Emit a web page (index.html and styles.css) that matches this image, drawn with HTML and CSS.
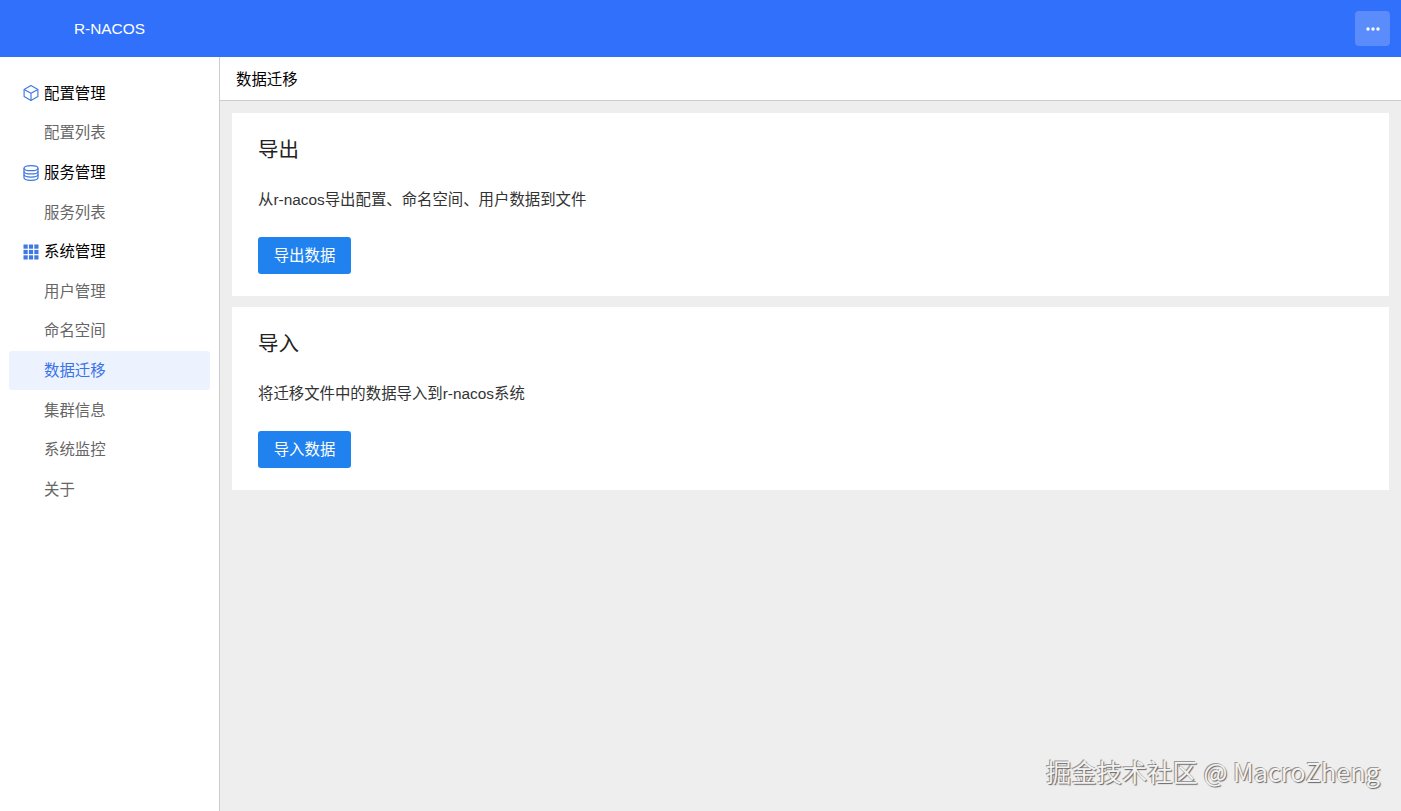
FILE: index.html
```html
<!DOCTYPE html>
<html lang="zh-CN">
<head>
<meta charset="utf-8">
<title>R-NACOS</title>
<link rel="stylesheet" href="styles.css">
</head>
<body>
<div class="app">
  <header class="topbar">
    <span class="brand">R-NACOS</span>
    <button class="more" aria-label="更多">
      <svg width="14" height="4" viewBox="0 0 14 4"><circle cx="2" cy="2" r="1.7"/><circle cx="7" cy="2" r="1.7"/><circle cx="12" cy="2" r="1.7"/></svg>
    </button>
  </header>
  <div class="body">
    <nav class="sidebar">
      <div class="nav-item group">
        <svg class="icon" viewBox="0 0 16 16" fill="none" stroke="#3f78e0" stroke-width="1.15" stroke-linejoin="round"><path d="M8 .6l6.9 3.8v7.2L8 15.4 1.1 11.6V4.4z"/><path d="M1.1 4.4L8 8.2l6.9-3.8M8 8.2v7.2"/></svg>
        <span>配置管理</span>
      </div>
      <div class="nav-item sub">配置列表</div>
      <div class="nav-item group">
        <svg class="icon" viewBox="0 0 16 16" fill="none" stroke="#3f78e0" stroke-width="1.25"><ellipse cx="8" cy="3.2" rx="7" ry="2.5"/><path d="M1 3.2v9.6c0 1.4 3.1 2.5 7 2.5s7-1.1 7-2.5V3.2"/><path d="M1 6.4c0 1.4 3.1 2.5 7 2.5s7-1.1 7-2.5M1 9.6c0 1.4 3.1 2.5 7 2.5s7-1.1 7-2.5"/></svg>
        <span>服务管理</span>
      </div>
      <div class="nav-item sub">服务列表</div>
      <div class="nav-item group">
        <svg class="icon" viewBox="0 0 16 16" fill="#3f78e0"><rect x=".5" y=".5" width="4.2" height="4.2"/><rect x="5.9" y=".5" width="4.2" height="4.2"/><rect x="11.3" y=".5" width="4.2" height="4.2"/><rect x=".5" y="5.9" width="4.2" height="4.2"/><rect x="5.9" y="5.9" width="4.2" height="4.2"/><rect x="11.3" y="5.9" width="4.2" height="4.2"/><rect x=".5" y="11.3" width="4.2" height="4.2"/><rect x="5.9" y="11.3" width="4.2" height="4.2"/><rect x="11.3" y="11.3" width="4.2" height="4.2"/></svg>
        <span>系统管理</span>
      </div>
      <div class="nav-item sub">用户管理</div>
      <div class="nav-item sub">命名空间</div>
      <div class="nav-item sub active">数据迁移</div>
      <div class="nav-item sub">集群信息</div>
      <div class="nav-item sub">系统监控</div>
      <div class="nav-item sub">关于</div>
    </nav>
    <main class="main">
      <div class="crumb">数据迁移</div>
      <div class="content">
        <section class="card">
          <h2 class="card-title">导出</h2>
          <p class="card-text">从r-nacos导出配置、命名空间、用户数据到文件</p>
          <button class="btn">导出数据</button>
        </section>
        <section class="card">
          <h2 class="card-title">导入</h2>
          <p class="card-text">将迁移文件中的数据导入到r-nacos系统</p>
          <button class="btn">导入数据</button>
        </section>
      </div>
    </main>
  </div>
  <div class="watermark">掘金技术社区 @ MacroZheng</div>
</div>
</body>
</html>
```
FILE: styles.css
```css
* { box-sizing: border-box; }
html, body { margin: 0; height: 100%; overflow: hidden; }
body {
  font-family: "Liberation Sans", "Noto Sans CJK SC", sans-serif;
  font-size: 15.4px;
  color: #333;
  background: #eee;
}
.app { position: relative; height: 811px; display: flex; flex-direction: column; }
.topbar {
  height: 57px;
  flex: none;
  background: #3070fa;
  display: flex;
  align-items: center;
  justify-content: space-between;
  padding: 0 11px 0 74px;
}
.brand { color: #fff; font-size: 15.4px; }
.more {
  width: 35px;
  height: 35px;
  border: 0;
  border-radius: 4px;
  background: #5a8cfb;
  display: flex;
  align-items: center;
  justify-content: center;
  padding: 0;
}
.more svg { fill: #fff; display: block; }
.body { flex: 1; display: flex; min-height: 0; }
.sidebar {
  width: 220px;
  flex: none;
  background: #fff;
  border-right: 1px solid #ccc;
  padding: 16.6px 9px 0;
}
.nav-item {
  height: 39.6px;
  display: flex;
  align-items: center;
  gap: 5px;
  width: 201px;
  padding: 0 0 3px 14px;
  color: #000;
}
.icon { width: 16px; height: 16px; flex: none; margin-top: 3px; }
.sub { padding-left: 35px; color: #666; }
.active { color: #3a72e8; background: #ecf3fe; border-radius: 3px; }
.main { flex: 1; min-width: 0; display: flex; flex-direction: column; }
.crumb {
  height: 44px;
  flex: none;
  background: #fff;
  border-bottom: 1px solid #ccc;
  display: flex;
  align-items: center;
  padding: 0 0 2px 16px;
  color: #000;
}
.content {
  padding: 12px 12px 0;
  display: flex;
  flex-direction: column;
  gap: 11px;
}
.card {
  height: 183px;
  background: #fff;
  padding: 24px 26px 0;
}
.card-title {
  margin: 0;
  font-size: 20.5px;
  font-weight: 400;
  line-height: 26px;
  color: #222;
}
.card-text {
  margin: 25px 0 0;
  line-height: 24px;
  color: #333;
}
.btn {
  display: block;
  margin-top: 25px;
  width: 93px;
  height: 37px;
  border: 0;
  border-radius: 3px;
  background: #1f82ee;
  color: #fff;
  font: inherit;
  padding: 0 0 3px;
}
.watermark {
  position: absolute;
  right: 21px;
  top: 754px;
  font-family: "Noto Sans CJK SC", "Noto Sans", sans-serif;
  font-size: 25.3px;
  line-height: 34px;
  color: #f2f2f2;
  text-shadow: 1px 1px 1px #666, -1px -1px 0 #999;
  white-space: nowrap;
}
```
